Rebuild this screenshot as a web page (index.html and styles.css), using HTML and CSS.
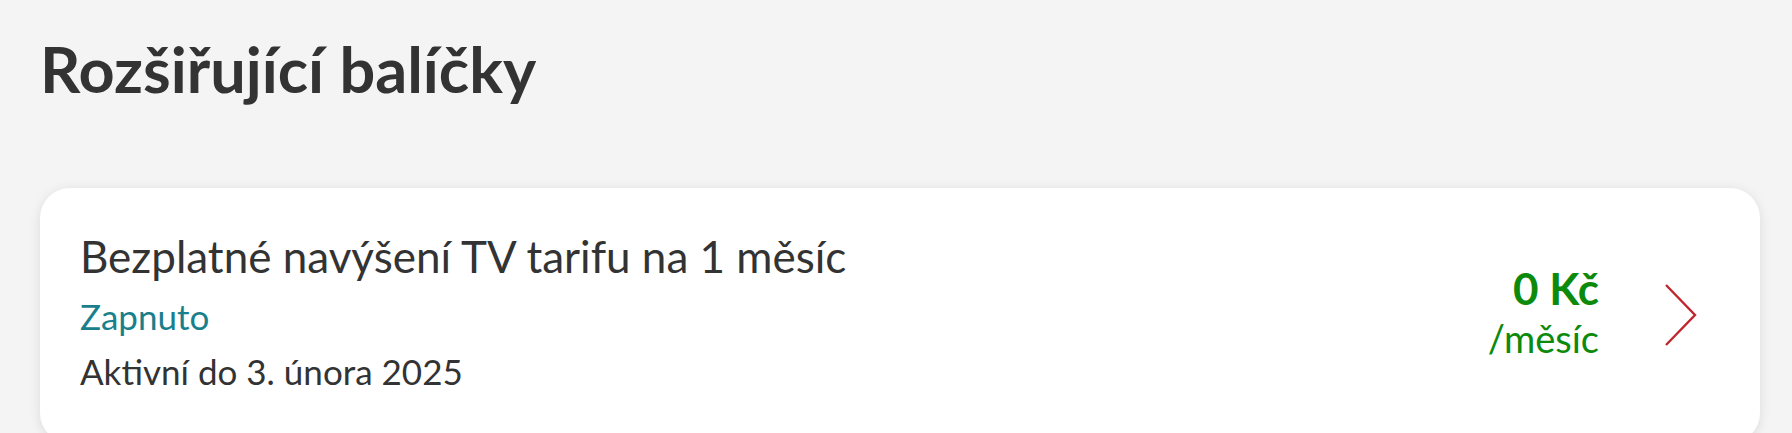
FILE: index.html
```html
<!DOCTYPE html>
<html lang="cs">

<head>
    <meta charset="UTF-8">
    <meta name="viewport" content="width=device-width, initial-scale=1.0">
    <title>Rozšiřující balíčky</title>
    <link rel="stylesheet" href="styles.css">
</head>

<body>
    <div class="page">
        <h1 class="page-title">Rozšiřující balíčky</h1>

        <div class="addon-card">
            <div class="addon-info">
                <div class="addon-name">Bezplatné navýšení TV tarifu na 1 měsíc</div>
                <div class="addon-status">Zapnuto</div>
                <div class="addon-valid">Aktivní do 3. února 2025</div>
            </div>
            <div class="addon-side">
                <div class="addon-price">
                    <div class="price-value">0 Kč</div>
                    <div class="price-period">/měsíc</div>
                </div>
                <svg class="chevron" width="32" height="62" viewBox="0 0 32 62">
                    <polyline points="1,1 30,31 1,61" fill="none" stroke="#c0262d" stroke-width="2.4" />
                </svg>
            </div>
        </div>
    </div>
</body>

</html>
```

FILE: styles.css
```css
body {
    margin: 0;
    padding: 0;
    background-color: #f4f4f4;
    color: #333;
    font-family: Lato, "Open Sans", sans-serif;
}

.page {
    padding: 33px 32px 0 40px;
}

.page-title {
    margin: 0;
    font-size: 63px;
    line-height: 72px;
    font-weight: 700;
    color: #333;
}

.addon-card {
    margin-top: 83px;
    background: #fff;
    border-radius: 30px;
    box-shadow: 0 2px 12px rgba(0, 0, 0, 0.1);
    padding: 43px 63px 44px 40px;
    display: flex;
    align-items: center;
}

.addon-info {
    flex: 1;
}

.addon-name {
    font-size: 44px;
    line-height: 50px;
    color: #333;
}

.addon-status {
    margin-top: 8px;
    font-size: 35px;
    line-height: 55px;
    color: #1a7f8c;
}

.addon-valid {
    font-size: 35px;
    line-height: 55px;
    color: #333;
}

.addon-side {
    display: flex;
    align-items: center;
    gap: 66px;
}

.addon-price {
    text-align: right;
    color: #0b8a0b;
}

.price-value {
    font-size: 44px;
    line-height: 47px;
    font-weight: 700;
}

.price-period {
    font-size: 38px;
    line-height: 53px;
}

.chevron {
    display: block;
}
```
